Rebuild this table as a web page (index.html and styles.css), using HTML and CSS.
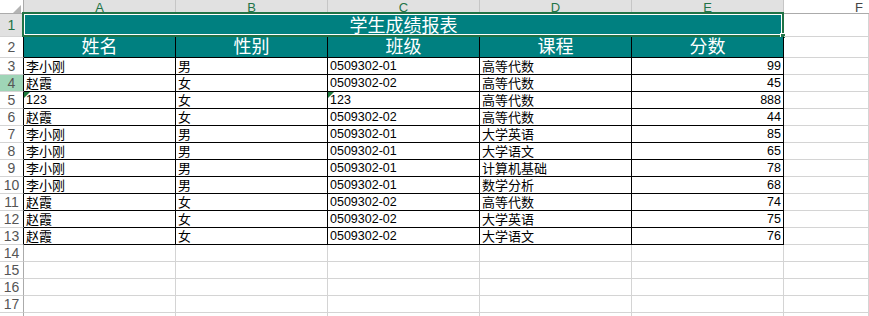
FILE: index.html
```html
<!DOCTYPE html>
<html lang="zh">
<head>
<meta charset="utf-8">
<title>学生成绩报表</title>
<link rel="stylesheet" href="styles.css">
</head>
<body>
<div class="sheet">
  <div class="corner"><span class="tri"></span></div>
  <div class="ch sel">A</div>
  <div class="ch sel">B</div>
  <div class="ch sel">C</div>
  <div class="ch sel">D</div>
  <div class="ch sel">E</div>
  <div class="ch last">F</div>

  <div class="rh sel">1</div>
  <div class="title">学生成绩报表<div class="selection"><span class="handle"></span></div></div>
  <div class="c"></div>

  <div class="rh tb">2</div>
  <div class="hd">姓名</div>
  <div class="hd">性别</div>
  <div class="hd">班级</div>
  <div class="hd">课程</div>
  <div class="hd">分数</div>
  <div class="c"></div>

  <div class="rh tb">3</div>
  <div class="d">李小刚</div><div class="d">男</div><div class="d num">0509302-01</div><div class="d">高等代数</div><div class="d num r">99</div><div class="c"></div>

  <div class="rh tb hover">4</div>
  <div class="d">赵霞</div><div class="d">女</div><div class="d num">0509302-02</div><div class="d">高等代数</div><div class="d num r">45</div><div class="c"></div>

  <div class="rh tb">5</div>
  <div class="d num"><span class="flag"></span>123</div><div class="d">女</div><div class="d num"><span class="flag"></span>123</div><div class="d">高等代数</div><div class="d num r">888</div><div class="c"></div>

  <div class="rh tb">6</div>
  <div class="d">赵霞</div><div class="d">女</div><div class="d num">0509302-02</div><div class="d">高等代数</div><div class="d num r">44</div><div class="c"></div>

  <div class="rh tb">7</div>
  <div class="d">李小刚</div><div class="d">男</div><div class="d num">0509302-01</div><div class="d">大学英语</div><div class="d num r">85</div><div class="c"></div>

  <div class="rh tb">8</div>
  <div class="d">李小刚</div><div class="d">男</div><div class="d num">0509302-01</div><div class="d">大学语文</div><div class="d num r">65</div><div class="c"></div>

  <div class="rh tb">9</div>
  <div class="d">李小刚</div><div class="d">男</div><div class="d num">0509302-01</div><div class="d">计算机基础</div><div class="d num r">78</div><div class="c"></div>

  <div class="rh tb">10</div>
  <div class="d">李小刚</div><div class="d">男</div><div class="d num">0509302-01</div><div class="d">数学分析</div><div class="d num r">68</div><div class="c"></div>

  <div class="rh tb">11</div>
  <div class="d">赵霞</div><div class="d">女</div><div class="d num">0509302-02</div><div class="d">高等代数</div><div class="d num r">74</div><div class="c"></div>

  <div class="rh tb">12</div>
  <div class="d">赵霞</div><div class="d">女</div><div class="d num">0509302-02</div><div class="d">大学英语</div><div class="d num r">75</div><div class="c"></div>

  <div class="rh tb">13</div>
  <div class="d">赵霞</div><div class="d">女</div><div class="d num">0509302-02</div><div class="d">大学语文</div><div class="d num r">76</div><div class="c"></div>

  <div class="rh">14</div><div class="c"></div><div class="c"></div><div class="c"></div><div class="c"></div><div class="c"></div><div class="c"></div>
  <div class="rh">15</div><div class="c"></div><div class="c"></div><div class="c"></div><div class="c"></div><div class="c"></div><div class="c"></div>
  <div class="rh">16</div><div class="c"></div><div class="c"></div><div class="c"></div><div class="c"></div><div class="c"></div><div class="c"></div>
  <div class="rh">17</div><div class="c"></div><div class="c"></div><div class="c"></div><div class="c"></div><div class="c"></div><div class="c"></div>
  <div class="rh"></div><div class="c"></div><div class="c"></div><div class="c"></div><div class="c"></div><div class="c"></div><div class="c"></div>
</div>
</body>
</html>
```

FILE: styles.css
```css
html, body {
  margin: 0;
  padding: 0;
  background: #fff;
  overflow: hidden;
}

.sheet {
  display: grid;
  grid-template-columns: 24px repeat(5, 152px) 85px;
  grid-template-rows: 14px 23px 21px repeat(16, 17px);
  font-family: "Liberation Sans", "Noto Sans CJK SC", sans-serif;
  width: 869px;
  height: 316px;
  overflow: hidden;
}

.sheet > div {
  box-sizing: border-box;
  border-right: 1px solid #d4d4d4;
  border-bottom: 1px solid #d4d4d4;
  display: flex;
  align-items: flex-end;
  overflow: visible;
  white-space: nowrap;
  position: relative;
  line-height: 1;
  min-width: 0;
}

.corner {
  background: #fff;
  border-bottom-color: #ababab !important;
  border-right-color: #ababab !important;
}

.tri {
  position: absolute;
  right: 2px;
  bottom: 0;
  width: 8px;
  height: 8px;
  background: #b4b4b4;
  clip-path: polygon(100% 0, 100% 100%, 0 100%);
}

.ch {
  justify-content: center;
  align-items: center !important;
  font-size: 13px;
  color: #444;
  background: #fff;
  border-bottom-color: #ababab !important;
  padding-top: 1px;
}

.ch.sel {
  background: #e1e1e1;
  color: #217346;
  border-right-color: #c6c6c6;
}

.ch.last {
  justify-content: flex-start;
  padding-left: 71px;
  border-right: 0;
}

.rh {
  justify-content: center;
  align-items: center !important;
  font-size: 14px;
  color: #555;
  background: #fff;
  border-right-color: #ababab !important;
}

.rh.sel {
  background: #e1e1e1;
  color: #217346;
}

.rh.tb {
  border-right-color: #000 !important;
}

.rh.hover {
  background: #9fd5b7;
}

.title {
  grid-column: span 5;
  background: #008080;
  color: #fff;
  font-size: 18px;
  justify-content: center;
  padding-bottom: 1px;
}

.selection {
  position: absolute;
  left: -2px;
  top: -2px;
  right: -1px;
  bottom: -1px;
  border: 2px solid #217346;
  box-shadow: inset 0 0 0 1px #fff;
  pointer-events: none;
}

.handle {
  position: absolute;
  right: -4px;
  bottom: -4px;
  width: 6px;
  height: 6px;
  box-sizing: border-box;
  background: #217346;
  border: 1px solid #fff;
}

.hd {
  background: #008080;
  color: #fff;
  font-size: 18px;
  justify-content: center;
  padding-bottom: 1px;
  border-color: #000 !important;
}

.d {
  font-size: 13px;
  color: #000;
  padding: 0 2px 1px 2px;
  border-color: #000 !important;
}

.num {
  font-size: 12.5px;
  padding-bottom: 2px;
}

.r {
  justify-content: flex-end;
}

.flag {
  position: absolute;
  left: 0;
  top: 0;
  width: 6px;
  height: 6px;
  background: #1f7a3f;
  clip-path: polygon(0 0, 100% 0, 0 100%);
}
```
